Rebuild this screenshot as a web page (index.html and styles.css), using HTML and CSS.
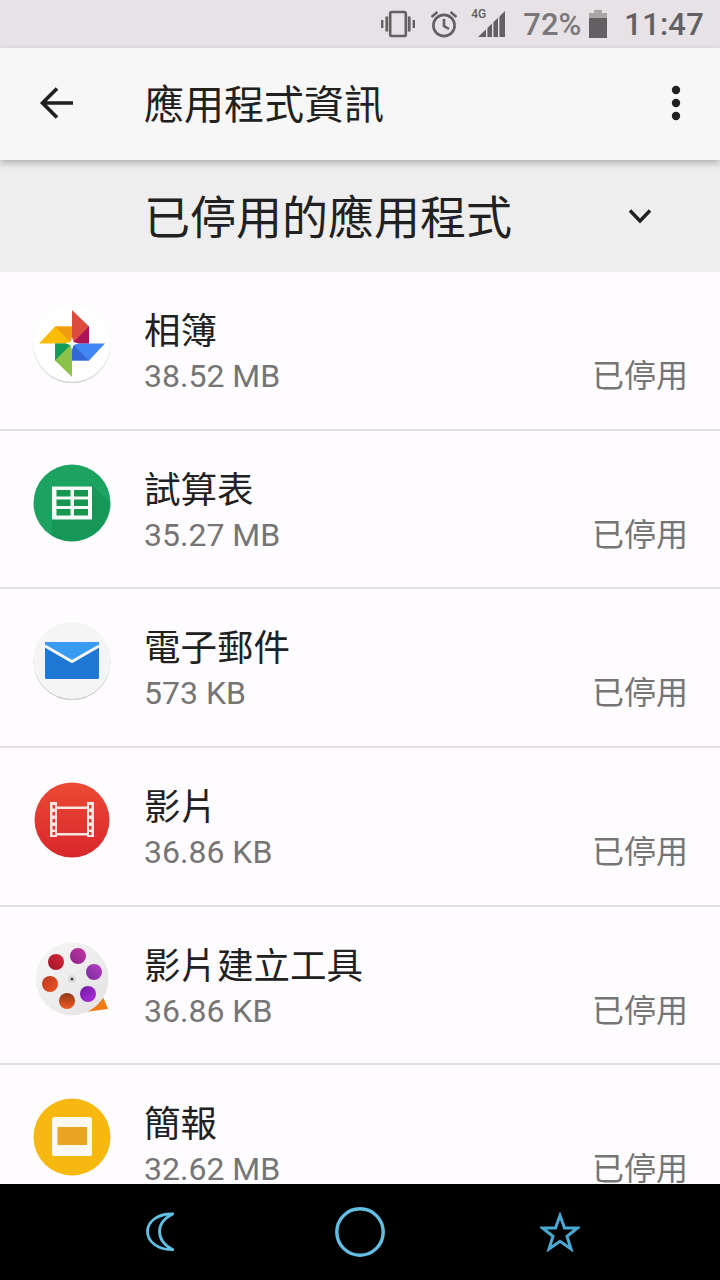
FILE: index.html
```html
<!DOCTYPE html>
<html lang="zh-Hant">
<head>
<meta charset="utf-8">
<title>應用程式資訊</title>
<link rel="stylesheet" href="styles.css">
</head>
<body>
<div class="screen">
  <div class="status">
    <svg class="st-vib" viewBox="0 0 36 28" width="36" height="28"><g fill="none" stroke="#636063" stroke-width="2.6"><rect x="10.200" y="2" width="15.600" height="24" rx="1.600"/></g><g fill="#636063"><rect x="5.400" y="6.500" width="2.800" height="15"/><rect x="27.800" y="6.500" width="2.800" height="15"/><rect x="1" y="10" width="2.400" height="8"/><rect x="32.600" y="10" width="2.400" height="8"/></g></svg>
    <svg class="st-alarm" viewBox="0 0 30 30" width="30" height="30"><g fill="none" stroke="#636063" stroke-width="2.600"><circle cx="15" cy="16.500" r="10.600"/><path d="M15 10v7l5 3"/><path d="M2.500 8l6-5M27.500 8l-6-5"/></g></svg>
    <span class="st-net"><span class="st-4g">4G</span><svg viewBox="0 0 30 28" width="30" height="28"><path fill="#636063" d="M28 1v26H1z"/><g fill="#e6e2e5"><rect x="9" y="14" width="1.400" height="14"/><rect x="15" y="8" width="1.400" height="20"/><rect x="21" y="2" width="1.400" height="26"/></g></svg></span>
    <span class="st-pct">72%</span>
    <svg class="st-bat" viewBox="0 0 20 30" width="20" height="30"><path fill="#a9a6a8" d="M6 1h8v3h5v24H1V4h5z"/><rect fill="#636063" x="1" y="9" width="18" height="20"/></svg>
    <span class="st-time">11:47</span>
  </div>

  <header class="toolbar">
    <svg class="tb-back" viewBox="0 0 36 36" width="36" height="36"><path fill="none" stroke="#212121" stroke-width="3.600" d="M34 18H5M18 3.500L3.500 18 18 32.500"/></svg>
    <h1 class="tb-title">應用程式資訊</h1>
    <svg class="tb-more" viewBox="0 0 10 36" width="10" height="36"><circle cx="5" cy="5" r="4.200"/><circle cx="5" cy="18" r="4.200"/><circle cx="5" cy="31" r="4.200"/></svg>
  </header>

  <div class="filter">
    <span class="filter-label">已停用的應用程式</span>
    <svg class="filter-chev" viewBox="0 0 24 16" width="24" height="16"><path fill="none" stroke="#212121" stroke-width="3.400" d="M2 2.500L12 13 22 2.500"/></svg>
  </div>

  <main class="list">
    <div class="row">
      <svg class="app" viewBox="0 0 78 78" width="78" height="78">
        <circle cx="39" cy="39.800" r="38.500" fill="#d4d2d4"/><circle cx="39" cy="38.500" r="38.500" fill="#fff"/>
        <path fill="#fbbc05" d="M39 38.500H6l16-17h17z"/><path fill="#f39c12" d="M22 21.500h17v17z"/>
        <path fill="#dc4b3e" d="M39 38.500V5l17 16.500v17z"/><path fill="#ad1457" d="M56 21.500v17H39z"/>
        <path fill="#4285f4" d="M39 38.500h33l-16 17H39z"/><path fill="#3367d6" d="M56 55.500H39V38.500z"/>
        <path fill="#8bc34a" d="M39 38.500V72L22 55.500v-17z"/><path fill="#0f9d58" d="M22 55.500v-17h17z"/>
        <path fill="#fff" d="M39 32l1.600 4.900 4.900 1.600-4.900 1.600L39 45l-1.600-4.900-4.900-1.600 4.900-1.600z"/>
      </svg>
      <div class="row-text"><div class="row-name">相簿</div><div class="row-size">38.52 MB</div></div>
      <div class="row-state">已停用</div>
    </div>
    <div class="row">
      <svg class="app" viewBox="0 0 78 78" width="78" height="78">
        <circle cx="39" cy="39" r="38.500" fill="#1ca362"/><path fill="#0e8c4e" d="M58 20l19 19A38.500 38.500 0 0 1 19 72L19 55z" opacity=".5"/>
        <path fill="#f4faf6" d="M19 22.500h40v33H19z"/><path fill="#16964f" d="M23.500 26h14v6.500h-14zM41 26h14v6.500H41zM23.500 35.500h14v6.500h-14zM41 35.500h14v6.500H41zM23.500 45h14v6.500h-14zM41 45h14v6.500H41z"/>
      </svg>
      <div class="row-text"><div class="row-name">試算表</div><div class="row-size">35.27 MB</div></div>
      <div class="row-state">已停用</div>
    </div>
    <div class="row">
      <svg class="app" viewBox="0 0 78 78" width="78" height="78">
        <circle cx="39" cy="39.800" r="38.500" fill="#cfcdcf"/><circle cx="39" cy="38.500" r="38.500" fill="#f6f5f5"/>
        <rect x="12" y="20" width="54" height="37" rx="1.500" fill="#1f78d6"/>
        <path fill="#3a9bf2" d="M12 20h54v3L39 38 12 23z"/>
        <path fill="none" stroke="#f4f7fa" stroke-width="3" d="M12 24l27 15.500L66 24"/>
      </svg>
      <div class="row-text"><div class="row-name">電子郵件</div><div class="row-size">573 KB</div></div>
      <div class="row-state">已停用</div>
    </div>
    <div class="row">
      <svg class="app" viewBox="0 0 78 78" width="78" height="78">
        <defs><linearGradient id="filmred" x1="0" y1="0" x2="0" y2="1"><stop offset="0" stop-color="#ec4a35"/><stop offset="1" stop-color="#d9262c"/></linearGradient></defs>
        <circle cx="39" cy="39" r="37.500" fill="url(#filmred)"/>
        <path fill="#f9e6e2" fill-rule="evenodd" d="M17 21h7v4.500h30V21h7v35h-7v-1.500H24V56h-7zM24 28v24h30V28zM19.500 24v3.500h2.500V24zM19.500 31v3.500h2.500V31zM19.500 38v3.500h2.500V38zM19.500 45v3.500h2.500V45zM19.500 51v3h2.500v-3zM56 24v3.500h2.500V24zM56 31v3.500h2.500V31zM56 38v3.500h2.500V38zM56 45v3.500h2.500V45zM56 51v3h2.500v-3z"/>
      </svg>
      <div class="row-text"><div class="row-name">影片</div><div class="row-size">36.86 KB</div></div>
      <div class="row-state">已停用</div>
    </div>
    <div class="row">
      <svg class="app" viewBox="0 0 78 78" width="78" height="78">
        <defs>
          <linearGradient id="reelbody" x1="0" y1="0" x2="1" y2="1"><stop offset="0" stop-color="#f8f7f7"/><stop offset="1" stop-color="#e3e1e1"/></linearGradient>
          <linearGradient id="h1" x1="0" y1="1" x2="1" y2="0"><stop offset="0" stop-color="#a0152a"/><stop offset="1" stop-color="#d8283a"/></linearGradient>
          <linearGradient id="h2" x1="0" y1="1" x2="1" y2="0"><stop offset="0" stop-color="#8d2390"/><stop offset="1" stop-color="#c0389f"/></linearGradient>
          <linearGradient id="h3" x1="0" y1="1" x2="1" y2="0"><stop offset="0" stop-color="#7a2a9c"/><stop offset="1" stop-color="#b63fc0"/></linearGradient>
          <linearGradient id="h4" x1="0" y1="0" x2="1" y2="1"><stop offset="0" stop-color="#b8391c"/><stop offset="1" stop-color="#f0552a"/></linearGradient>
          <linearGradient id="h5" x1="0" y1="0" x2="0" y2="1"><stop offset="0" stop-color="#8f3715"/><stop offset="1" stop-color="#f05a22"/></linearGradient>
          <linearGradient id="h6" x1="0" y1="0" x2="1" y2="1"><stop offset="0" stop-color="#6d1aa0"/><stop offset="1" stop-color="#b02ee0"/></linearGradient>
        </defs>
        <path fill="#ef7b14" d="M52 72l23-3-5-12z"/>
        <circle cx="39" cy="38.700" r="36.500" fill="url(#reelbody)"/>
        <circle cx="23" cy="22" r="8" fill="url(#h1)"/><circle cx="45" cy="16" r="8" fill="url(#h2)"/><circle cx="61" cy="32" r="8" fill="url(#h3)"/><circle cx="17" cy="44" r="8" fill="url(#h4)"/><circle cx="34" cy="61" r="8" fill="url(#h5)"/><circle cx="55" cy="54" r="8" fill="url(#h6)"/>
        <circle cx="39" cy="39" r="4" fill="#dcdcdc"/><circle cx="39" cy="39" r="1.500" fill="#444"/>
      </svg>
      <div class="row-text"><div class="row-name">影片建立工具</div><div class="row-size">36.86 KB</div></div>
      <div class="row-state">已停用</div>
    </div>
    <div class="row">
      <svg class="app" viewBox="0 0 78 78" width="78" height="78">
        <circle cx="39" cy="39" r="38.500" fill="#f7b80f"/>
        <rect x="19" y="19" width="40" height="39" rx="2.500" fill="#fbf9f2"/><rect x="24.500" y="29" width="29.500" height="18" fill="#eba522"/>
      </svg>
      <div class="row-text"><div class="row-name">簡報</div><div class="row-size">32.62 MB</div></div>
      <div class="row-state">已停用</div>
    </div>
  </main>

  <nav class="navbar">
    <svg class="nav-moon" viewBox="0 0 28 40" width="28" height="40"><path fill="none" stroke="#62bfe4" stroke-width="2.800" d="M26.500 2C11 1.500 1.500 10 1.500 19.500S11 38 26.500 37.500C18 33 13.500 27 13.500 19.500S18 6.500 26.500 2z"/></svg>
    <svg class="nav-home" viewBox="0 0 50 50" width="50" height="50"><circle cx="25" cy="25" r="23.200" fill="none" stroke="#62bfe4" stroke-width="3.400"/></svg>
    <svg class="nav-star" viewBox="0 0 40 40" width="40" height="40"><path fill="none" stroke="#4aa9d2" stroke-width="3" d="M20 3.500l4.500 12.500H37.500L27 24.200 31 37 20 29.300 9 37l4-12.800L2.500 16h13z"/></svg>
  </nav>
</div>
</body>
</html>
```
FILE: styles.css
```css
* { box-sizing: border-box; }
html, body { margin: 0; padding: 0; }
body {
  font-family: Roboto, "Noto Sans CJK TC", sans-serif;
  background: #fefcff;
}
.screen {
  width: 720px;
  height: 1280px;
  display: flex;
  flex-direction: column;
  overflow: hidden;
}
.status {
  height: 48px;
  flex: none;
  background: #e6e2e5;
  color: #636063;
  display: flex;
  align-items: center;
  padding-right: 16px;
  justify-content: flex-end;
}
.st-vib { margin-right: 13.500px; }
.st-alarm { margin-right: 18px; }
.st-net { position: relative; display: block; width: 30px; height: 28px; margin-right: 16px; }
.st-net svg { display: block; }
.st-4g { position: absolute; left: -6px; top: -3px; font-size: 12px; font-weight: 500; line-height: 14px; }
.st-pct { font-size: 31px; font-weight: 500; color: #7a777a; margin: 2px 7px 0 0; line-height: 48px; }
.st-bat { margin-right: 16px; }
.st-time { font-size: 31px; font-weight: 500; line-height: 48px; letter-spacing: .2px; margin-top: 2px; }
.toolbar {
  height: 112px;
  flex: none;
  background: #f7f7f7;
  display: flex;
  align-items: center;
  padding: 0 39px;
  box-shadow: 0 3px 7px rgba(0, 0, 0, .28);
  position: relative;
  z-index: 1;
}
.tb-back { margin-bottom: 2px; }
.tb-title {
  margin: 0 0 4px 69px;
  flex: 1;
  font-size: 40px;
  font-weight: 400;
  color: #212121;
  font-family: "Noto Sans CJK TC", sans-serif;
  line-height: 56px;
}
.tb-more { fill: #212121; margin: 0 0 2px 0; }
.filter {
  height: 112px;
  flex: none;
  background: #eeeeee;
  display: flex;
  align-items: center;
  justify-content: space-between;
  padding: 0 68px 4px 144px;
}
.filter-chev { margin-top: 4px; }
.filter-label {
  font-family: "Noto Sans CJK TC", sans-serif;
  font-size: 46px;
  color: #212121;
  line-height: 60px;
}
.list {
  flex: 1;
  min-height: 0;
  overflow: hidden;
  background: #fefcff;
}
.row {
  height: 158.700px;
  border-bottom: 2px solid #e2e0e2;
  padding: 33px 32px 0 33px;
  display: flex;
  align-items: flex-start;
  position: relative;
}
.app { flex: none; display: block; }
.row-text { margin-left: 33px; flex: 1; }
.row-name {
  font-family: "Noto Sans CJK TC", sans-serif;
  font-size: 36.500px;
  line-height: 50px;
  color: #212121;
  margin: -1px 0 1px;
}
.row-size {
  font-size: 32px;
  line-height: 42px;
  color: #757575;
}
.row-state {
  font-family: "Noto Sans CJK TC", sans-serif;
  font-size: 32px;
  line-height: 42px;
  color: #757575;
  margin-top: 47px;
}
.navbar {
  height: 96px;
  flex: none;
  background: #000;
  display: flex;
  align-items: center;
  padding: 0 0 0 146px;
  position: relative;
}
.nav-moon { margin-right: 161px; }
.nav-home { margin-right: 155px; }
```
